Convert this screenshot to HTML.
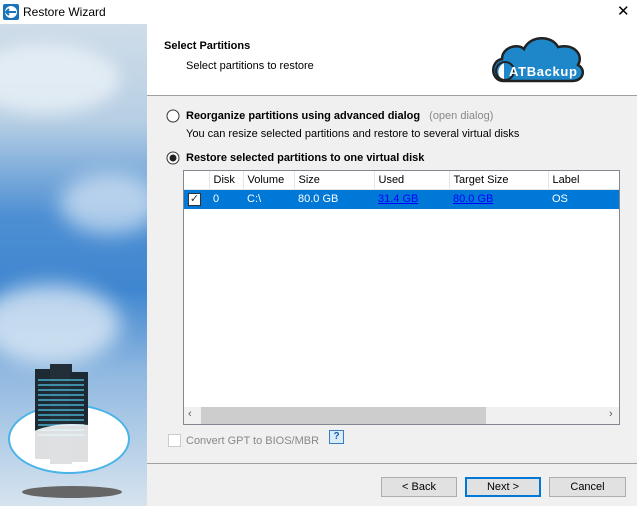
<!DOCTYPE html>
<html><head><meta charset="utf-8"><style>
*{margin:0;padding:0;box-sizing:border-box}
body{width:637px;height:506px;overflow:hidden;font-family:"Liberation Sans",sans-serif;font-size:11px;color:#000;background:#f0f0f0;position:relative}
.a{position:absolute}
.btn{position:absolute;top:477px;height:20px;background:#e1e1e1;border:1px solid #adadad;text-align:center;line-height:18px;font-size:11px}
th,td{font-weight:normal;text-align:left;padding-left:4px;white-space:nowrap}
</style></head><body>
<div class="a" style="left:0;top:0;width:637px;height:24px;background:#fff"></div>
<svg class="a" style="left:3px;top:4px" width="16" height="16"><rect x="0" y="0" width="16" height="16" rx="2" fill="#1a73b8"/><circle cx="8" cy="8" r="6" fill="#fff"/><path d="M3 8h10M6 5l-3 3 3 3" stroke="#1a73b8" stroke-width="2" fill="none"/></svg>
<div class="a" style="left:23px;top:5px;font-size:12px">Restore Wizard</div>
<div class="a" style="left:617px;top:2px;font-size:15px">✕</div>
<div class="a" style="left:0;top:24px;width:147px;height:482px;background:linear-gradient(180deg,#cfdde9 0%,#b7cfe4 20%,#4d8fd3 40%,#3f86d0 55%,#8fb8e0 72%,#d6e3ee 100%);overflow:hidden">
<div class="a" style="left:-30px;top:20px;width:150px;height:70px;border-radius:50%;background:rgba(240,245,250,.7);filter:blur(8px)"></div>
<div class="a" style="left:-20px;top:260px;width:140px;height:80px;border-radius:50%;background:rgba(240,245,250,.7);filter:blur(10px)"></div>
<div class="a" style="left:60px;top:150px;width:100px;height:60px;border-radius:50%;background:rgba(240,245,250,.6);filter:blur(10px)"></div>
<div class="a" style="left:8px;top:380px;width:122px;height:70px;border-radius:50%;background:#fff;border:2px solid #4ab3e8"></div>
<div class="a" style="left:35px;top:345px;width:20px;height:90px;background:#1d2a33"></div>
<div class="a" style="left:50px;top:340px;width:22px;height:100px;background:#222f38"></div>
<div class="a" style="left:70px;top:348px;width:18px;height:90px;background:#1d2a33"></div>
<div class="a" style="left:38px;top:355px;width:46px;height:60px;background:repeating-linear-gradient(180deg,#4bb8d8 0 2px,transparent 2px 5px);opacity:.7"></div>
<div class="a" style="left:20px;top:400px;width:104px;height:45px;border-radius:50%;background:rgba(255,255,255,.85)"></div>
<div class="a" style="left:22px;top:462px;width:100px;height:12px;border-radius:50%;background:#666"></div>
</div>
<div class="a" style="left:147px;top:24px;width:490px;height:72px;background:#fff;border-bottom:1px solid #a0a0a0"></div>
<div class="a" style="left:164px;top:40px;font-weight:bold">Select Partitions</div>
<div class="a" style="left:186px;top:60px">Select partitions to restore</div>
<svg class="a" style="left:490px;top:33px" width="95" height="52"><path d="M14 48 C0 48 0 28 12 26 C12 14 28 10 34 16 C40 2 62 2 68 14 C84 10 94 22 88 32 C96 36 94 48 82 48 Z" fill="#1d87c9" stroke="#222" stroke-width="2.5"/><path d="M14 30 a10 10 0 0 0 0 18 Z" fill="#fff"/><circle cx="15" cy="38" r="9" fill="none" stroke="#222" stroke-width="2"/><text x="19" y="43" font-family="Liberation Sans" font-weight="bold" font-size="13" fill="#fff" textLength="68">ATBackup</text></svg>
<svg class="a" style="left:166px;top:109px" width="14" height="14"><circle cx="7" cy="7" r="6" fill="#fff" stroke="#333"/></svg>
<div class="a" style="left:186px;top:110px;font-weight:bold">Reorganize partitions using advanced dialog <span style="font-weight:normal;color:#888;margin-left:6px">(open dialog)</span></div>
<div class="a" style="left:186px;top:128px">You can resize selected partitions and restore to several virtual disks</div>
<svg class="a" style="left:166px;top:151px" width="14" height="14"><circle cx="7" cy="7" r="6" fill="#fff" stroke="#333"/><circle cx="7" cy="7" r="3.5" fill="#222"/></svg>
<div class="a" style="left:186px;top:152px;font-weight:bold">Restore selected partitions to one virtual disk</div>
<div class="a" style="left:183px;top:170px;width:437px;height:255px;background:#fff;border:1px solid #828790;overflow:hidden">
<table style="border-collapse:collapse;font-size:11px;width:600px">
<tr style="height:18px;border-bottom:1px solid #e5e5e5"><th style="width:25px;border-right:1px solid #e5e5e5"></th><th style="width:34px;border-right:1px solid #e5e5e5">Disk</th><th style="width:51px;border-right:1px solid #e5e5e5">Volume</th><th style="width:80px;border-right:1px solid #e5e5e5">Size</th><th style="width:75px;border-right:1px solid #e5e5e5">Used</th><th style="width:99px;border-right:1px solid #e5e5e5">Target Size</th><th>Label</th></tr>
<tr style="height:20px;background:#0078d7;color:#fff"><td><span style="display:inline-block;width:13px;height:13px;border:1px solid #333;background:#fff;color:#333;font-size:11px;line-height:11px;text-align:center">✓</span></td><td>0</td><td>C:\</td><td>80.0 GB</td><td style="color:#00f;text-decoration:underline">31.4 GB</td><td style="color:#00f;text-decoration:underline">80.0 GB</td><td>OS</td></tr>
</table>
<div class="a" style="left:0;top:236px;width:435px;height:17px;background:#f0f0f0"></div>
<div class="a" style="left:17px;top:236px;width:285px;height:17px;background:#cdcdcd"></div>
<div class="a" style="left:4px;top:237px;font-size:11px;color:#555">‹</div>
<div class="a" style="left:425px;top:237px;font-size:11px;color:#555">›</div>
</div>
<div class="a" style="left:168px;top:434px;width:13px;height:13px;border:1px solid #ccc;background:#fff"></div>
<div class="a" style="left:186px;top:435px;color:#888">Convert GPT to BIOS/MBR</div>
<div class="a" style="left:329px;top:430px;width:15px;height:14px;border:1px solid #3a7cc0;background:#d9ecfa;font-size:10px;text-align:center;line-height:12px;color:#1a5fa0;font-weight:bold">?</div>
<div class="a" style="left:147px;top:463px;width:490px;height:1px;background:#a0a0a0"></div>
<div class="btn" style="left:381px;width:76px">&lt; Back</div>
<div class="btn" style="left:465px;width:76px;border:2px solid #0078d7;line-height:16px">Next &gt;</div>
<div class="btn" style="left:549px;width:77px">Cancel</div>
</body></html>
